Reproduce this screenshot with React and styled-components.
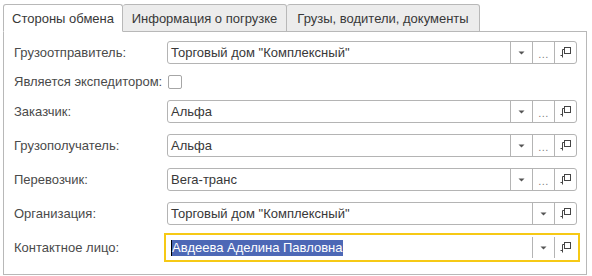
import React from "react";
import styled, { createGlobalStyle } from "styled-components";

const GlobalStyle = createGlobalStyle`
  html, body {
    margin: 0;
    padding: 0;
    background: #ffffff;
  }
  body {
    font-family: "Liberation Sans", Arial, sans-serif;
    font-size: 13px;
    color: #404040;
  }
`;

const Page = styled.div`
  width: 592px;
  height: 276px;
  box-sizing: border-box;
  padding: 4px 5px 1px 3px;
  display: flex;
  flex-direction: column;
`;

const Tabs = styled.div`
  display: flex;
  height: 28px;
  position: relative;
  z-index: 1;
`;

const Tab = styled.div`
  box-sizing: border-box;
  height: 28px;
  width: ${(p) => p.$w}px;
  display: flex;
  align-items: center;
  justify-content: center;
  border: 1px solid #b8b8b8;
  border-left-width: ${(p) => (p.$first ? 1 : 0)}px;
  border-bottom-color: ${(p) => (p.$active ? "#ffffff" : "#b8b8b8")};
  border-radius: 3px 3px 0 0;
  background: ${(p) => (p.$active ? "#ffffff" : "#ececec")};
  color: #383838;
  white-space: nowrap;
`;

const Panel = styled.div`
  flex: 1;
  margin-top: -1px;
  border: 1px solid #b8b8b8;
  padding: 9px 9px 0 10px;
  display: grid;
  grid-template-columns: 153px 1fr;
  grid-auto-rows: auto;
  row-gap: 11px;
  align-items: center;
  align-content: start;
`;

const Label = styled.div`
  color: #4a4a4a;
  white-space: nowrap;
  line-height: 14px;
`;

const Field = styled.div`
  box-sizing: border-box;
  height: 23px;
  display: flex;
  align-items: stretch;
  border: 1px solid ${(p) => (p.$focused ? "transparent" : "#b4b4b4")};
  border-radius: ${(p) => (p.$focused ? 0 : 3)}px;
  background: #ffffff;
  outline: ${(p) => (p.$focused ? "2px solid #f6c915" : "none")};
  outline-offset: 1px;
`;

const Value = styled.div`
  flex: 1;
  display: flex;
  align-items: center;
  padding-left: 3px;
  color: #383838;
  white-space: nowrap;
  overflow: hidden;
`;

const Selected = styled.span`
  background: #4d68b6;
  color: #ffffff;
  line-height: 16px;
  padding-right: 1px;
  border-left: 1px solid #000000;
`;

const Btn = styled.div`
  width: 21px;
  flex: none;
  display: flex;
  align-items: center;
  justify-content: center;
  border-left: 1px solid #b4b4b4;
  color: #808080;
  font-size: 11px;
`;

const Dots = styled.span`
  letter-spacing: 0.5px;
  margin-top: 3px;
`;

const Check = styled.div`
  box-sizing: border-box;
  width: 14px;
  height: 14px;
  margin-left: 1px;
  border: 1px solid #a6a6a6;
  border-radius: 2px;
  background: #ffffff;
`;

const Arrow = () => (
  <svg width="7" height="4" viewBox="0 0 7 4">
    <path d="M0.5 0.5h6L3.5 3.5z" fill="#555" />
  </svg>
);

const OpenIcon = () => (
  <svg width="11" height="11" viewBox="0 0 11 11">
    <rect x="4.5" y="0.5" width="6" height="6" fill="none" stroke="#444" />
    <path d="M4.5 2.5H2.5V10.5M0.5 8.5H2.5" fill="none" stroke="#444" />
  </svg>
);

const rows = [
  { label: "Грузоотправитель:", value: 'Торговый дом "Комплексный"', dots: true },
  { label: "Является экспедитором:", check: true },
  { label: "Заказчик:", value: "Альфа", dots: true },
  { label: "Грузополучатель:", value: "Альфа", dots: true },
  { label: "Перевозчик:", value: "Вега-транс", dots: true },
  { label: "Организация:", value: 'Торговый дом "Комплексный"' },
  { label: "Контактное лицо:", value: "Авдеева Аделина Павловна", focused: true },
];

export default function App() {
  return (
    <>
      <GlobalStyle />
      <Page>
        <Tabs>
          <Tab $w={120} $first $active>Стороны обмена</Tab>
          <Tab $w={164}>Информация о погрузке</Tab>
          <Tab $w={193}>Грузы, водители, документы</Tab>
        </Tabs>
        <Panel>
          {rows.map((r) => (
            <React.Fragment key={r.label}>
              <Label>{r.label}</Label>
              {r.check ? (
                <Check />
              ) : (
                <Field $focused={r.focused}>
                  <Value>
                    {r.focused ? <Selected>{r.value}</Selected> : r.value}
                  </Value>
                  <Btn><Arrow /></Btn>
                  {r.dots && <Btn><Dots>...</Dots></Btn>}
                  <Btn><OpenIcon /></Btn>
                </Field>
              )}
            </React.Fragment>
          ))}
        </Panel>
      </Page>
    </>
  );
}
